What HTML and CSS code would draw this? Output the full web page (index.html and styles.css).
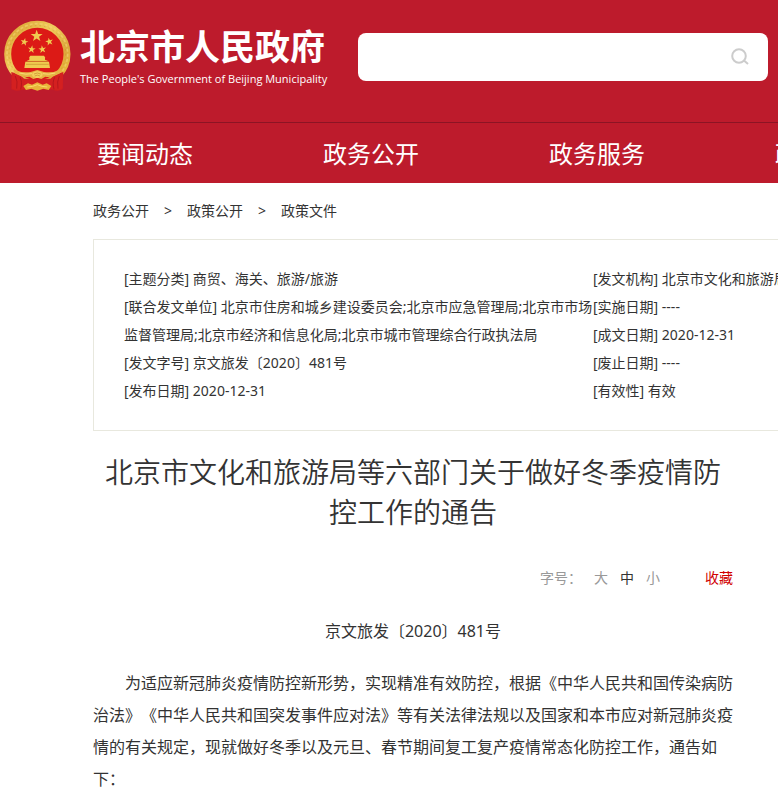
FILE: index.html
```html
<!DOCTYPE html>
<html lang="zh-CN">
<head>
<meta charset="utf-8">
<meta name="viewport" content="width=device-width, initial-scale=1">
<title>北京市文化和旅游局等六部门关于做好冬季疫情防控工作的通告</title>
<link rel="stylesheet" href="styles.css">
</head>
<body>
<header class="site-header">
  <div class="masthead">
    <a class="brand" href="#">
      <svg class="emblem" viewBox="0 0 240 270" aria-hidden="true">
        <defs>
          <linearGradient id="gold" x1="0" y1="0" x2="1" y2="1">
            <stop offset="0" stop-color="#d9a02f"/>
            <stop offset=".4" stop-color="#f0cc5c"/>
            <stop offset=".7" stop-color="#dca83c"/>
            <stop offset="1" stop-color="#f0bf3c"/>
          </linearGradient>
          <path id="star" d="M0-18 4.2-5.6 17.1-5.6 6.8 2.2 10.6 14.6 0 7-10.6 14.6-6.8 2.2-17.1-5.6-4.2-5.6Z"/>
        </defs>
        <path d="M36 180 34 238 Q52 246 70 238 H154 Q172 246 188 238 L188 180Z" fill="#d01f20"/>
        <circle cx="112" cy="132" r="89" fill="#dc1a16" stroke="url(#gold)" stroke-width="21"/>
        <circle cx="112" cy="132" r="91" fill="none" stroke="#f8dc80" stroke-width="5" stroke-dasharray="9 6" opacity=".5"/>
        <circle cx="112" cy="132" r="85" fill="none" stroke="#b98028" stroke-width="2" stroke-dasharray="5 9" opacity=".5"/>
        <path d="M34 186 Q60 192 74 208 L80 238 H44 Q34 238 36 228Z M190 186 Q164 192 150 208 L144 238 H180 Q190 238 188 228Z" fill="#d42020"/>
        <path d="M72 206H152L154 238H70Z" fill="#d42020"/>
        <path d="M46 198 Q54 214 50 236 M60 202 Q68 216 62 238 M178 198 Q170 214 174 236 M164 202 Q156 216 162 238" fill="none" stroke="#b5161c" stroke-width="3"/>
        <g fill="#f0cb50">
          <use href="#star" transform="translate(110 78) scale(1.05)"/>
          <use href="#star" transform="translate(73 96) rotate(12) scale(.68)"/>
          <use href="#star" transform="translate(148 95) rotate(-12) scale(.68)"/>
          <use href="#star" transform="translate(95 118) rotate(8) scale(.68)"/>
          <use href="#star" transform="translate(127 118) rotate(-8) scale(.68)"/>
          <path d="M91 137H132L136 143H87ZM88 143H135V149L144 153H80L88 149ZM76 155H147L150 174H73Z"/>
        </g>
        <path d="M80 154H144M78 163H146" stroke="#c8902c" stroke-width="2" fill="none"/>
        <path d="M42 178 Q64 190 92 186 L112 180 132 186 Q160 190 182 178 L180 190 Q156 204 136 200 L124 207 112 203 100 207 88 200 Q68 204 44 190Z" fill="#e6b443"/>
        <path d="M58 189Q78 195 96 191M166 189Q146 195 128 191" stroke="#f7dc76" stroke-width="3" fill="none"/>
        <ellipse cx="112" cy="194" rx="16" ry="10" fill="#f3cf5b"/>
        <path d="M102 192Q112 186 122 192M104 198Q112 193 120 198" stroke="#c38a2a" stroke-width="2" fill="none"/>
        <path d="M70 228 84 220 96 224 112 217 128 224 140 220 154 228 146 240 130 236 112 242 94 236 78 240Z" fill="#e8b43a"/>
        <path d="M82 231 98 229 112 224 126 229 142 231" stroke="#f8dc68" stroke-width="3" fill="none"/>
      </svg>
      <span class="brand-text">
        <span class="brand-cn">北京市人民政府</span>
        <span class="brand-en">The People's Government of Beijing Municipality</span>
      </span>
    </a>
    <form class="search" role="search">
      <input class="search-input" type="text" aria-label="搜索">
      <button class="search-button" type="button" aria-label="搜索">
        <svg viewBox="0 0 20 20" width="20" height="20" aria-hidden="true">
          <circle cx="9" cy="9" r="6.8"/>
          <path d="m14 13.5 4 3.5"/>
        </svg>
      </button>
    </form>
  </div>
  <nav class="main-nav">
    <a href="#">要闻动态</a>
    <a href="#">政务公开</a>
    <a href="#">政务服务</a>
    <a href="#">政民互动</a>
  </nav>
</header>
<main class="page">
  <nav class="crumbs">
    <a href="#">政务公开</a><span>&gt;</span><a href="#">政策公开</a><span>&gt;</span><a href="#">政策文件</a>
  </nav>
  <section class="info">
    <ul>
      <li>[主题分类] 商贸、海关、旅游/旅游</li>
      <li>[联合发文单位] 北京市住房和城乡建设委员会;北京市应急管理局;北京市市场监督管理局;北京市经济和信息化局;北京市城市管理综合行政执法局</li>
      <li>[发文字号] 京文旅发〔2020〕481号</li>
      <li>[发布日期] 2020-12-31</li>
    </ul>
    <ul>
      <li>[发文机构] 北京市文化和旅游局</li>
      <li>[实施日期] ----</li>
      <li>[成文日期] 2020-12-31</li>
      <li>[废止日期] ----</li>
      <li>[有效性] 有效</li>
    </ul>
  </section>
  <article class="article">
    <h1>北京市文化和旅游局等六部门关于做好冬季疫情防控工作的通告</h1>
    <div class="tools">
      <span class="size-label">字号：</span>
      <button type="button">大</button>
      <button type="button" class="current">中</button>
      <button type="button">小</button>
      <a class="favorite" href="#">收藏</a>
    </div>
    <p class="doc-number">京文旅发〔2020〕481号</p>
    <p class="body-text">为适应新冠肺炎疫情防控新形势，实现精准有效防控，根据《中华人民共和国传染病防治法》《中华人民共和国突发事件应对法》等有关法律法规以及国家和本市应对新冠肺炎疫情的有关规定，现就做好冬季以及元旦、春节期间复工复产疫情常态化防控工作，通告如下：</p>
  </article>
</main>
</body>
</html>
```
FILE: styles.css
```css
* {
  box-sizing: border-box;
}

body {
  margin: 0;
  overflow-x: hidden;
  background: #fff;
  color: #333;
  font: 14px/28px "Noto Sans", "Noto Sans CJK SC", sans-serif;
  text-spacing-trim: space-all;
}

a {
  color: inherit;
  text-decoration: none;
}

ul {
  margin: 0;
  padding: 0;
  list-style: none;
}

button {
  padding: 0;
  border: 0;
  background: none;
  color: inherit;
  font: inherit;
}

.site-header {
  background: #bd1b2c;
  color: #fff;
}

.masthead {
  display: flex;
  align-items: flex-start;
  gap: 32px;
  padding: 10px 10px 22px 0;
  border-bottom: 1px solid #8c1424;
}

.brand {
  display: flex;
  align-items: flex-start;
  white-space: nowrap;
}

.emblem {
  width: 80px;
  height: 90px;
}

.brand-text {
  display: flex;
  flex-direction: column;
  width: 246px;
  padding-top: 16px;
}

.brand-cn {
  font-size: 35px;
  font-weight: 700;
  line-height: 42px;
}

.brand-en {
  font-family: "Open Sans", sans-serif;
  font-size: 11px;
  line-height: 22px;
}

.search {
  display: flex;
  flex: 1;
  height: 48px;
  margin-top: 23px;
  border-radius: 8px;
  background: #fff;
}

.search-input {
  flex: 1;
  min-width: 0;
  padding: 0 16px;
  border: 0;
  border-radius: 8px;
  outline: 0;
  background: none;
  font: inherit;
}

.search-button {
  display: flex;
  align-items: center;
  justify-content: center;
  width: 56px;
}

.search-button svg {
  fill: none;
  stroke: #ccc;
  stroke-width: 2;
}

.main-nav {
  display: flex;
  gap: 130px;
  padding: 2px 0 0 97px;
  font-size: 24px;
  line-height: 58px;
  white-space: nowrap;
}

.page {
  padding-left: 93px;
}

.crumbs {
  display: flex;
  gap: 15px;
  padding: 14px 0;
}

.info {
  display: grid;
  grid-template-columns: repeat(2, minmax(469px, 1fr));
  min-width: 1000px;
  padding: 25px 30px;
  border: 1px solid #e8e8de;
}

.article {
  max-width: 640px;
}

.article h1 {
  margin: 21px 0 0;
  font-size: 28px;
  font-weight: 350;
  line-height: 40px;
  text-align: center;
}

.tools {
  display: flex;
  justify-content: flex-end;
  gap: 12px;
  margin-top: 32px;
  color: #999;
}

.tools .current {
  color: #333;
}

.favorite {
  margin-left: 33px;
  color: #d00000;
}

.doc-number {
  margin: 23px 0 0;
  font-size: 16px;
  line-height: 32px;
  text-align: center;
}

.body-text {
  margin: 20px 0 0;
  font-size: 16px;
  line-height: 32px;
  text-indent: 2em;
}
```
